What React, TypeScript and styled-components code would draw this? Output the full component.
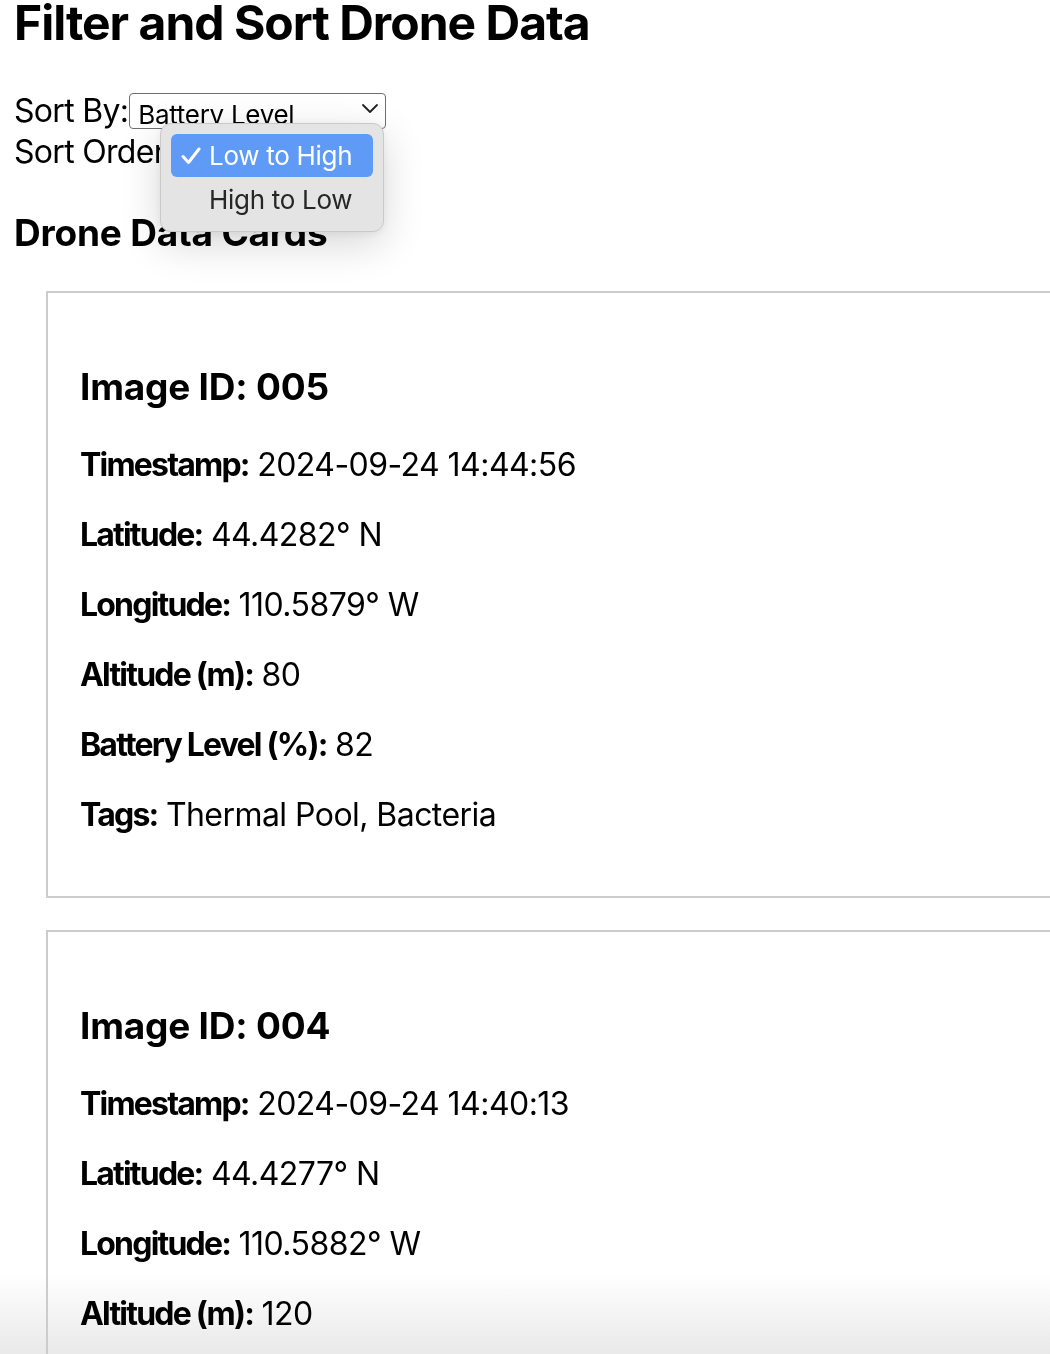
import React from "react";
import styled, { createGlobalStyle } from "styled-components";

const Global = createGlobalStyle`
  html { overflow: hidden; }
  body {
    margin: 0;
    padding: 0 0 0 14px;
    background: #ffffff;
    color: #000000;
    font-family: Inter, "Noto Sans", "Liberation Sans", sans-serif;
  }
`;

const Page = styled.div`
  display: flex;
  flex-direction: column;
`;

const Title = styled.h1`
  font-size: 48px;
  line-height: 58px;
  font-weight: 700;
  letter-spacing: -1px;
  margin: -6px 0 38px 0;
`;

const Controls = styled.div`
  position: relative;
  display: flex;
  flex-direction: column;
`;

const ControlRow = styled.div`
  display: flex;
  align-items: center;
  height: 41px;
  font-size: 32px;
  line-height: 41px;
  letter-spacing: -0.7px;
`;

const Label = styled.span`
  white-space: nowrap;
`;

const SelectBox = styled.div`
  box-sizing: border-box;
  width: 257px;
  height: 36px;
  margin-left: 1px;
  border: 1.5px solid #6f6f6f;
  border-radius: 4px;
  display: flex;
  align-items: flex-start;
  justify-content: space-between;
  padding: 3px 6px 0 8px;
  font-size: 26px;
  line-height: 36px;
  letter-spacing: -0.3px;
  overflow: hidden;
  background: #fff;
`;

const Chevron = styled.svg`
  margin-top: 6px;
  flex: none;
`;

const Popup = styled.div`
  position: absolute;
  left: 146px;
  top: 33px;
  width: 224px;
  box-sizing: border-box;
  padding: 10px 10px 10px 10px;
  background: #e4e4e4;
  border: 1px solid #c9c9c9;
  border-radius: 11px;
  box-shadow: 0 12px 40px rgba(0, 0, 0, 0.16), 0 2px 8px rgba(0, 0, 0, 0.06);
  display: flex;
  flex-direction: column;
  gap: 1px;
  z-index: 5;
`;

const Option = styled.div<{ $active?: boolean }>`
  height: 43px;
  border-radius: 6px;
  display: flex;
  align-items: center;
  font-size: 26px;
  letter-spacing: -0.3px;
  color: ${(p) => (p.$active ? "#ffffff" : "#262626")};
  background: ${(p) => (p.$active ? "#5f9bf6" : "transparent")};
`;

const Check = styled.span`
  width: 37px;
  flex: none;
  display: flex;
  justify-content: center;
  padding-left: 1px;
`;

const SectionTitle = styled.h2`
  font-size: 37px;
  line-height: 44px;
  font-weight: 700;
  letter-spacing: -0.2px;
  margin: 39px 0 36px 0;
`;

const CardList = styled.div`
  display: flex;
  flex-direction: column;
  gap: 32px;
  margin-left: 32px;
`;

const Card = styled.section`
  width: 1100px;
  border: 2px solid #cccccc;
  padding: 35px 32px 30px 32px;
`;

const CardTitle = styled.h3`
  font-size: 37px;
  line-height: 44px;
  font-weight: 700;
  letter-spacing: -0.2px;
  margin: 37px 0 37px 0;
`;

const Field = styled.p`
  font-size: 32px;
  line-height: 38px;
  margin: 32px 0;
  letter-spacing: -0.55px;
`;

const FieldName = styled.strong`
  font-weight: 700;
  letter-spacing: -1.8px;
`;

const BottomFade = styled.div`
  position: fixed;
  left: 0;
  right: 0;
  bottom: 0;
  height: 80px;
  z-index: -1;
  background: linear-gradient(to bottom, rgba(233, 233, 233, 0), rgba(233, 233, 233, 1));
  pointer-events: none;
`;

type Drone = {
  id: string;
  timestamp: string;
  latitude: string;
  longitude: string;
  altitude: number;
  battery: number;
  tags: string;
};

const drones: Drone[] = [
  {
    id: "005",
    timestamp: "2024-09-24 14:44:56",
    latitude: "44.4282° N",
    longitude: "110.5879° W",
    altitude: 80,
    battery: 82,
    tags: "Thermal Pool, Bacteria",
  },
  {
    id: "004",
    timestamp: "2024-09-24 14:40:13",
    latitude: "44.4277° N",
    longitude: "110.5882° W",
    altitude: 120,
    battery: 85,
    tags: "Geyser, Steam",
  },
];

export default function App() {
  return (
    <Page>
      <Global />
      <Title>Filter and Sort Drone Data</Title>
      <Controls>
        <ControlRow>
          <Label>Sort By:</Label>
          <SelectBox>
            <span>Battery Level</span>
            <Chevron width="18" height="11" viewBox="0 0 18 11">
              <polyline points="2,2 9,9 16,2" fill="none" stroke="#222" strokeWidth="1.8" strokeLinecap="round" strokeLinejoin="round" />
            </Chevron>
          </SelectBox>
        </ControlRow>
        <ControlRow>
          <Label>Sort Order:</Label>
        </ControlRow>
        <Popup>
          <Option $active>
            <Check>
              <svg width="20" height="18" viewBox="0 0 20 18">
                <polyline points="2,9.5 7.5,15.5 18,2" fill="none" stroke="#fff" strokeWidth="3" strokeLinecap="round" strokeLinejoin="round" />
              </svg>
            </Check>
            Low to High
          </Option>
          <Option>
            <Check />
            High to Low
          </Option>
        </Popup>
      </Controls>
      <SectionTitle>Drone Data Cards</SectionTitle>
      <CardList>
        {drones.map((d) => (
          <Card key={d.id}>
            <CardTitle>Image ID: {d.id}</CardTitle>
            <Field><FieldName>Timestamp:</FieldName> {d.timestamp}</Field>
            <Field><FieldName>Latitude:</FieldName> {d.latitude}</Field>
            <Field><FieldName>Longitude:</FieldName> {d.longitude}</Field>
            <Field><FieldName>Altitude (m):</FieldName> {d.altitude}</Field>
            <Field><FieldName>Battery Level (%):</FieldName> {d.battery}</Field>
            <Field><FieldName>Tags:</FieldName> {d.tags}</Field>
          </Card>
        ))}
      </CardList>
      <BottomFade />
    </Page>
  );
}
